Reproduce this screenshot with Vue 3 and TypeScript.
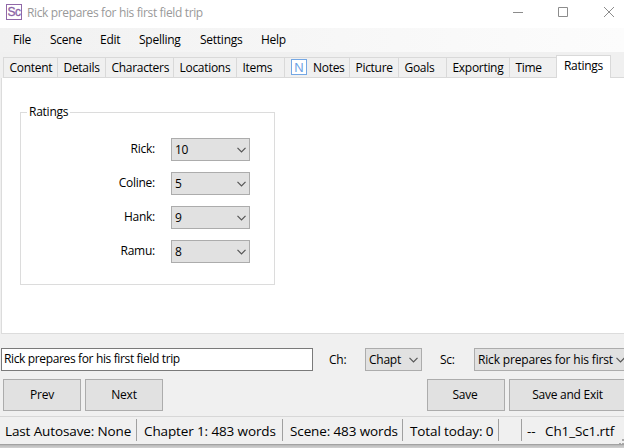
<script setup lang="ts">
import { ref } from 'vue'

interface Tab { label: string; width: number; icon?: boolean }

const menus: string[] = ['File', 'Scene', 'Edit', 'Spelling', 'Settings', 'Help']
const tabs: Tab[] = [
  { label: 'Content', width: 54 },
  { label: 'Details', width: 48 },
  { label: 'Characters', width: 68 },
  { label: 'Locations', width: 63 },
  { label: 'Items', width: 48 },
  { label: 'Notes', width: 65, icon: true },
  { label: 'Picture', width: 49 },
  { label: 'Goals', width: 48 },
  { label: 'Exporting', width: 63 },
  { label: 'Time', width: 47 },
  { label: 'Ratings', width: 55 },
]
const active = ref('Ratings')
const title = ref('Rick prepares for his first field trip')
const ratings = [
  { name: 'Rick', value: 10 },
  { name: 'Coline', value: 5 },
  { name: 'Hank', value: 9 },
  { name: 'Ramu', value: 8 },
]
const status = [
  { text: 'Last Autosave: None', width: 137 },
  { text: 'Chapter 1: 483 words', width: 146 },
  { text: 'Scene: 483 words', width: 120 },
  { text: 'Total today: 0', width: 96 },
  { text: '', width: 23 },
]
</script>

<template>
  <div class="window">
    <header class="titlebar">
      <span class="logo">Sc</span>
      <span class="caption">{{ title }}</span>
      <svg class="controls" width="104" height="12" viewBox="0 0 104 12" fill="none" stroke="#8c8c8c">
        <path d="M0 6.5H10M45.5 1.5h9v9h-9z" />
        <path d="M91 1l10 10M101 1L91 11" />
      </svg>
    </header>
    <nav class="menubar">
      <span v-for="m in menus" :key="m" class="menu" :class="'menu-' + m.toLowerCase()">{{ m }}</span>
    </nav>
    <div class="tabs">
      <div
        v-for="t in tabs"
        :key="t.label"
        class="tab"
        :class="{ active: t.label === active }"
        :style="{ width: t.width + 'px' }"
        @click="active = t.label"
      >
        <span v-if="t.icon" class="note">N</span>{{ t.label }}
      </div>
      <div class="rest"></div>
    </div>
    <main class="page">
      <section class="group">
        <h2 class="legend">Ratings</h2>
        <div v-for="r in ratings" :key="r.name" class="row">
          <span class="name">{{ r.name }}:</span>
          <div class="combo">
            <span class="value">{{ r.value }}</span>
            <svg class="chev" width="9" height="6" viewBox="0 0 9 6"><path d="M.5.8l4 4 4-4" /></svg>
          </div>
        </div>
      </section>
    </main>
    <div class="fields">
      <input v-model="title" class="input" spellcheck="false" />
      <span class="label ch">Ch:</span>
      <div class="combo chapter">
        <span class="value">Chapt</span>
        <svg class="chev" width="9" height="6" viewBox="0 0 9 6"><path d="M.5.8l4 4 4-4" /></svg>
      </div>
      <span class="label sc">Sc:</span>
      <div class="combo scene-select">
        <span class="value">Rick prepares for his first</span>
        <svg class="chev" width="9" height="6" viewBox="0 0 9 6"><path d="M.5.8l4 4 4-4" /></svg>
      </div>
    </div>
    <div class="buttons">
      <button>Prev</button>
      <button>Next</button>
      <button class="save">Save</button>
      <button class="exit">Save and Exit</button>
    </div>
    <footer class="status">
      <span v-for="(s, i) in status" :key="i" class="cell" :style="{ width: s.width + 'px' }">{{ s.text }}</span>
      <span class="file"><span class="dashes">--</span>Ch1_Sc1.rtf</span>
      <svg class="grip" width="5" height="8" viewBox="0 0 5 8"><path d="M3 0h2v2H3zM3 4h2v2H3zM0 4h2v2H0z" fill="#a9a9a9" /></svg>
    </footer>
    <div class="edge"></div>
  </div>
</template>

<style>
body {
  overflow: hidden;
}
</style>

<style scoped>
.window {
  width: 624px;
  height: 448px;
  overflow: hidden;
  display: flex;
  flex-direction: column;
  background: #f0f0f0;
  color: #000;
  font: 12px/16px 'Open Sans', 'Noto Sans', sans-serif;
  letter-spacing: -0.25px;
  white-space: nowrap;
}
.window * {
  box-sizing: border-box;
}
.titlebar {
  height: 28px;
  flex: none;
  display: flex;
  align-items: flex-start;
  padding-left: 6px;
  background: #fff;
}
.logo {
  width: 16px;
  height: 16px;
  margin-top: 4px;
  border: 1px solid #9068a8;
  color: #8a62a4;
  font: 12px/14px 'Liberation Sans', sans-serif;
  -webkit-text-stroke: 0.3px #8a62a4;
  text-align: center;
  letter-spacing: -0.6px;
}
.caption {
  margin: 5px 0 0 5px;
  color: #999;
  letter-spacing: -0.36px;
}
.controls {
  margin: 6px 7px 0 auto;
}
.menubar {
  height: 24px;
  flex: none;
  display: flex;
  padding: 4px 0 0 13px;
  background: linear-gradient(90deg, #f1f1f1, #fcfcfc);
}
.menu {
  flex: none;
  width: 37px;
}
.menu-scene {
  width: 50px;
}
.menu-edit {
  width: 39px;
}
.menu-spelling,
.menu-settings {
  width: 61px;
}
.tabs {
  height: 26px;
  flex: none;
  display: flex;
  align-items: flex-end;
  padding-left: 3px;
}
.tab {
  flex: none;
  height: 21px;
  display: flex;
  padding: 2px 0 0 5.5px;
  border: 1px solid #d9d9d9;
  border-right: 0;
  letter-spacing: -0.3px;
}
.tab.active {
  height: 23px;
  padding: 2px 0 0 7px;
  background: #fff;
  border-right: 1px solid #d9d9d9;
  border-bottom: 0;
}
.note {
  width: 16px;
  height: 16px;
  margin: -1px 6px 0 0.5px;
  border: 1px solid #74a7e4;
  background: #fff;
  color: #6da2e4;
  font: 13px/15px 'Liberation Sans', sans-serif;
  text-align: center;
  letter-spacing: 0;
}
.rest {
  flex: 1;
  border-bottom: 1px solid #d9d9d9;
}
.page {
  height: 256px;
  flex: none;
  margin-left: 1px;
  padding: 34px 0 0 18px;
  background: #fff;
  border: solid #dcdcdc;
  border-width: 0 0 1px 1px;
}
.group {
  width: 255px;
  height: 173px;
  border: 1px solid #dcdcdc;
}
.legend {
  width: max-content;
  height: 16px;
  margin: -9px 0 18px 6px;
  padding: 0 2px;
  background: #fff;
  font: inherit;
}
.row {
  height: 23px;
  display: flex;
  margin-bottom: 11px;
}
.name {
  width: 134px;
  margin: 3px 16px 0 0;
  text-align: right;
}
.combo {
  flex: none;
  width: 79px;
  height: 23px;
  display: flex;
  align-items: center;
  justify-content: space-between;
  padding: 0 3.5px 0 3px;
  background: #e1e1e1;
  border: 1px solid #acacac;
}
.chev {
  flex: none;
  fill: none;
  stroke: #555;
  stroke-width: 1.2;
}
.fields {
  height: 45px;
  flex: none;
  display: flex;
  padding: 14px 0 0 1px;
}
.input {
  flex: none;
  width: 312px;
  height: 23px;
  padding: 0 0 2px 2px;
  background: #fff;
  border: 1px solid #7a7a7a;
  border-radius: 0;
  outline: 0;
  color: #000;
  font: inherit;
  letter-spacing: -0.36px;
}
.label {
  flex: none;
  width: 36px;
  margin: 4px 0 0 16px;
}
.sc {
  width: 34px;
  margin-left: 18px;
}
.chapter {
  width: 57px;
}
.scene-select {
  width: 154px;
  padding-right: 2px;
  letter-spacing: -0.17px;
}
.buttons {
  height: 37px;
  flex: none;
  display: flex;
  gap: 4px;
  padding-left: 3px;
}
button {
  flex: none;
  width: 78px;
  height: 32px;
  padding: 0;
  background: #e1e1e1;
  border: 1px solid #acacac;
  border-radius: 0;
  color: #000;
  font: inherit;
  letter-spacing: -0.25px;
}
.save {
  margin-left: 260px;
  padding-right: 2px;
}
.exit {
  width: 118px;
  padding-right: 1px;
}
.status {
  height: 28px;
  flex: none;
  display: flex;
  padding-top: 2px;
  border-top: 1px solid #d7d7d7;
  font-size: 13.5px;
  line-height: 24px;
  letter-spacing: -0.12px;
}
.cell {
  flex: none;
  height: 22px;
  padding-left: 7px;
  border-right: 1px solid #a0a0a0;
}
.cell:first-child {
  padding-left: 5px;
}
.file {
  padding-left: 5px;
}
.dashes {
  display: inline-block;
  width: 18px;
}
.grip {
  flex: none;
  margin: 20px 0 0 auto;
}
.edge {
  flex: 1;
  border-top: 1px solid #a2a2a2;
  background: linear-gradient(#b8b8b8, #d2d2d2);
}
</style>
